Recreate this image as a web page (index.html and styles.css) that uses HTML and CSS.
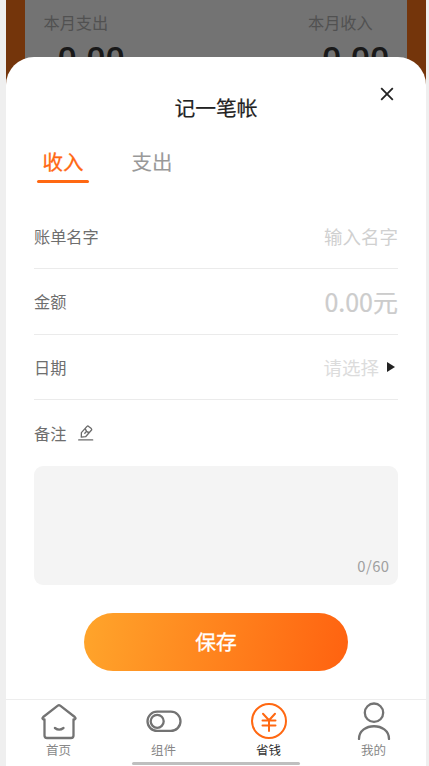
FILE: index.html
```
<!DOCTYPE html>
<html lang="zh-CN">
<head>
<meta charset="utf-8">
<meta name="viewport" content="width=device-width, initial-scale=1">
<title>记一笔帐</title>
<link rel="stylesheet" href="styles.css">
</head>
<body>
<div class="phone">
  <header class="summary">
    <div class="total"><span class="total-label">本月支出</span><strong class="total-value">0.00</strong></div>
    <div class="total"><span class="total-label">本月收入</span><strong class="total-value">0.00</strong></div>
  </header>
  <main class="sheet">
    <svg class="close" viewBox="0 0 14 14"><path d="M1.2 1.2 12.8 12.8M12.8 1.2 1.2 12.8"/></svg>
    <h1 class="title">记一笔帐</h1>
    <div class="tabs">
      <span class="tab active">收入</span>
      <span class="tab">支出</span>
    </div>
    <div class="row"><span class="label">账单名字</span><span class="hint">输入名字</span></div>
    <div class="row"><span class="label">金额</span><span class="hint amount">0.00元</span></div>
    <div class="row"><span class="label">日期</span><span class="hint date">请选择</span><svg class="arrow" viewBox="0 0 8 10"><path d="M0 0 8 5 0 10Z"/></svg></div>
    <div class="row note"><span class="label">备注</span><svg class="pen" viewBox="0 0 16 16"><path d="M.7 14.9H14.7M3.3 12.2 3.4 7.6 9 1.4Q9.8.6 10.7 1.4L13.3 3.6Q14.1 4.4 13.3 5.3L7.6 11.7ZM7.4 3.9Q8 7 11 7.5M6.8 8.2 8.2 6.7"/></svg></div>
    <div class="memo"><span class="count">0/60</span></div>
    <div class="save">保存</div>
  </main>
  <nav class="nav">
    <div class="item"><svg class="icon" viewBox="0 0 38 38"><path d="M4.5 17.5V33.5Q4.5 36 7 36H31Q33.5 36 33.5 33.5V17.5H34.5Q36.5 16.5 34.8 15L20.2 3.7Q19 2.8 17.8 3.7L3.2 15Q1.5 16.5 3.5 17.5ZM14.9 26Q19.2 29.3 23.5 26"/></svg><span>首页</span></div>
    <div class="item"><svg class="icon" viewBox="0 0 38 38"><rect x="2.5" y="9.7" width="33" height="19.2" rx="9.6"/><circle cx="12.2" cy="19.3" r="6.5"/></svg><span>组件</span></div>
    <div class="item current"><svg class="icon" viewBox="0 0 38 38"><circle cx="19" cy="19" r="17"/><path d="M13 11.7 19 18.2 25 11.7M12.5 18.5H25.5M12.5 23.5H25.5M19 18.2V29"/></svg><span>省钱</span></div>
    <div class="item"><svg class="icon" viewBox="0 0 38 38"><circle cx="19" cy="10.7" r="9.2"/><path d="M4 37C4 20 34 20 34 37"/></svg><span>我的</span></div>
    <i class="home-bar"></i>
  </nav>
</div>
</body>
</html>
```
FILE: styles.css
```
* { box-sizing: border-box; }
body {
  margin: 0;
  background: #efefef;
  font-family: "Noto Sans CJK SC", sans-serif;
  color: #6e6e6e;
}
.phone {
  width: 420px;
  height: 766px;
  margin-left: 6px;
  background: #74350b;
  display: flex;
  flex-direction: column;
  overflow: hidden;
}
.summary {
  height: 57px;
  flex: none;
  margin: 0 19px 0 18.5px;
  padding: 0 0 0 19px;
  background: #737373;
  display: flex;
  justify-content: space-between;
  box-shadow: 0 30px #737373;
}
.total { width: 100px; display: flex; flex-direction: column; }
.total:last-child { width: 99px; }
.total-label { font-size: 16.2px; line-height: 24px; margin-top: 10px; color: #515151; }
.total-value { font-family: Roboto, sans-serif; font-weight: 500; font-size: 34px; line-height: 40px; margin: 5px 0 0 14px; color: #191919; }
.sheet {
  position: relative;
  height: 642px;
  flex: none;
  background: #fff;
  border-radius: 28px 28px 0 0;
  padding: 0 28px;
}
.close {
  position: absolute;
  left: 374px;
  top: 30px;
  width: 14px;
  height: 14px;
  stroke: #222;
  stroke-width: 1.8;
}
.title {
  margin: 0;
  padding-top: 35px;
  font-size: 20.8px;
  line-height: 30px;
  font-weight: 400;
  -webkit-text-stroke: .2px;
  text-align: center;
  color: #222;
}
.tabs { display: flex; gap: 37px; margin: 22px 0 20.6px 3px; }
.tab {
  width: 52px;
  height: 39px;
  font-size: 20.5px;
  line-height: 34px;
  text-align: center;
  -webkit-text-stroke: .1px;
  color: #999;
}
.active { color: #ff6812; -webkit-text-stroke: .3px; }
.active::after {
  content: "";
  display: block;
  height: 3.5px;
  margin-top: 1.5px;
  border-radius: 2px;
  background: #ff6812;
}
.row {
  height: 65.6px;
  border-bottom: 1.5px solid #ebebeb;
  display: flex;
  align-items: center;
}
.label { font-size: 16.2px; line-height: 24px; }
.hint { margin-left: auto; font-size: 18.5px; line-height: 28px; color: #d0d0d0; }
.amount { font-size: 25px; -webkit-text-stroke: .2px; color: #ccc; }
.date { color: #dcdcdc; }
.arrow { width: 8px; height: 10px; margin: 0 3px 0 8px; fill: #222; }
.note { border: 0; }
.pen { width: 16px; height: 16px; margin-left: 11.5px; fill: none; stroke: #6b6b6b; stroke-width: 1.3; stroke-linejoin: round; stroke-linecap: round; }
.memo {
  height: 119px;
  border-radius: 9px;
  background: #f4f4f4;
  display: flex;
  align-items: flex-end;
  justify-content: flex-end;
  padding: 0 9px 9px;
}
.count { font-size: 14.8px; letter-spacing: .4px; margin-right: -.4px; line-height: 20px; color: #a0a0a0; }
.save {
  width: 264px;
  height: 58.5px;
  margin: 28px 0 0 50px;
  border-radius: 30px;
  background: linear-gradient(100deg, #ffa52b, #ff6210);
  color: #fff;
  font-size: 20.8px;
  line-height: 57px;
  -webkit-text-stroke: .3px;
  text-align: center;
}
.nav {
  position: relative;
  height: 67px;
  background: #fff;
  border-top: 1px solid #ededed;
  display: grid;
  grid-template-columns: repeat(4, 105px);
}
.item { display: flex; flex-direction: column; align-items: center; font-size: 12.5px; line-height: 18px; color: #888; padding-top: 2px; }
.icon { width: 38px; height: 38px; margin-bottom: 1px; fill: none; stroke: #737373; stroke-width: 2.3; stroke-linecap: round; stroke-linejoin: round; }
.current { color: #333; }
.current .icon { stroke: #ff6812; stroke-width: 2; }
.home-bar { position: absolute; left: 126px; bottom: 1px; width: 168px; height: 3px; border-radius: 2px; background: #bfbfbf; }
```
